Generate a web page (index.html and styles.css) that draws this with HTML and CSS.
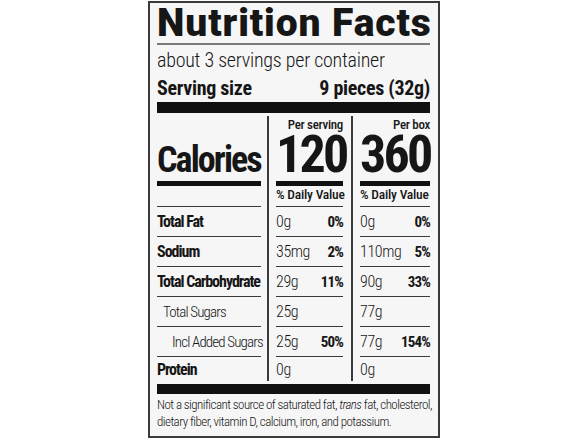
FILE: index.html
```html
<!DOCTYPE html>
<html>
<head>
<meta charset="utf-8">
<link rel="stylesheet" href="styles.css">
</head>
<body>
<div class="label">
  <div class="title">Nutrition Facts</div>
  <div class="servings">about 3 servings per container</div>
  <div class="size"><span>Serving size</span><span>9 pieces (32g)</span></div>
  <div class="bar thick"></div>
  <div class="table">
    <div class="col col-name">
      <div class="head">
        <div class="cal">Calories</div>
        <div class="bar mid"></div>
      </div>
      <div class="row b">Total Fat</div>
      <div class="row b">Sodium</div>
      <div class="row b">Total Carbohydrate</div>
      <div class="row ind1">Total Sugars</div>
      <div class="row ind2">Incl Added Sugars</div>
      <div class="row b last">Protein</div>
    </div>
    <div class="col col-val">
      <div class="head">
        <div class="per">Per serving</div>
        <div class="num">120</div>
        <div class="bar mid"></div>
        <div class="dv">% Daily Value</div>
      </div>
      <div class="row"><span>0g</span><b>0%</b></div>
      <div class="row"><span>35mg</span><b>2%</b></div>
      <div class="row"><span>29g</span><b>11%</b></div>
      <div class="row"><span>25g</span></div>
      <div class="row"><span>25g</span><b>50%</b></div>
      <div class="row last"><span>0g</span></div>
    </div>
    <div class="col col-val end">
      <div class="head">
        <div class="per">Per box</div>
        <div class="num">360</div>
        <div class="bar mid"></div>
        <div class="dv">% Daily Value</div>
      </div>
      <div class="row"><span>0g</span><b>0%</b></div>
      <div class="row"><span>110mg</span><b>5%</b></div>
      <div class="row"><span>90g</span><b>33%</b></div>
      <div class="row"><span>77g</span></div>
      <div class="row"><span>77g</span><b>154%</b></div>
      <div class="row last"><span>0g</span></div>
    </div>
  </div>
  <div class="bar foot"></div>
  <p class="note">Not a significant source of saturated fat, <i>trans</i> fat, cholesterol,<br>dietary fiber, vitamin D, calcium, iron, and potassium.</p>
</div>
</body>
</html>
```

FILE: styles.css
```css
html, body {
  margin: 0;
  padding: 0;
  background: #ffffff;
}
body {
  padding: 1px 0 0 148px;
  font-family: Roboto, "Open Sans", sans-serif;
  font-stretch: 75%;
  font-weight: 300;
  color: #161616;
}
.label {
  box-sizing: border-box;
  width: 292px;
  height: 437px;
  border: 2px solid #3a3a3a;
  background: #f6f6f6;
  padding: 0 8px 0 7px;
}
.title {
  font-stretch: 100%;
  font-weight: 900;
  font-size: 39px;
  line-height: 40px;
  height: 40px;
  letter-spacing: 0.9px;
  white-space: nowrap;
  border-bottom: 2px solid #7a7a7a;
}
.servings {
  font-size: 20px;
  line-height: 26px;
  height: 26px;
  margin-top: 2px;
  letter-spacing: -0.25px;
  white-space: nowrap;
}
.size {
  display: flex;
  justify-content: space-between;
  font-weight: 700;
  font-size: 20px;
  line-height: 24px;
  height: 24px;
  margin-top: 3px;
  letter-spacing: -0.3px;
  white-space: nowrap;
}
.bar { background: #111; }
.bar.thick { height: 11px; margin-top: 2px; }
.bar.mid { height: 5px; }
.bar.foot { height: 10px; margin-top: 3px; }
.table {
  display: flex;
  margin-top: 3px;
}
.col {
  display: flex;
  flex-direction: column;
}
.col-name {
  width: 104px;
  padding-right: 6px;
  border-right: 2px solid #3a3a3a;
}
.col-val {
  width: 67px;
  padding: 0 8px 0 7px;
  border-right: 2px solid #3a3a3a;
}
.col-val.end {
  width: 70px;
  padding-right: 0;
  border-right: none;
}
.head {
  height: 90px;
  display: flex;
  flex-direction: column;
}
.col-name .head { justify-content: flex-end; }
.cal {
  font-weight: 700;
  font-size: 36px;
  line-height: 40px;
  letter-spacing: -1.9px;
  white-space: nowrap;
}
.col-name .bar.mid { margin-top: 1px; margin-bottom: 20px; }
.per {
  text-align: right;
  font-weight: 500;
  font-size: 13px;
  line-height: 14px;
  letter-spacing: -0.3px;
  margin-top: 2px;
  white-space: nowrap;
}
.num {
  text-align: right;
  font-weight: 700;
  font-size: 52px;
  line-height: 46px;
  height: 46px;
  letter-spacing: -2.8px;
  padding-right: 2px;
  white-space: nowrap;
}
.col-val .bar.mid { margin-top: 3px; }
.dv {
  font-weight: 500;
  font-size: 13.5px;
  line-height: 17px;
  letter-spacing: -0.2px;
  white-space: nowrap;
}
.row {
  box-sizing: border-box;
  height: 30px;
  border-top: 1px solid #3a3a3a;
  display: flex;
  justify-content: space-between;
  align-items: center;
  font-size: 15px;
  letter-spacing: -0.85px;
  white-space: nowrap;
}
.row.last { height: 25px; }
.row.b { font-weight: 700; font-size: 16px; letter-spacing: -1px; }
.row span {
  font-weight: 300;
  font-size: 16px;
  letter-spacing: -0.4px;
}
.row b {
  font-weight: 700;
  font-size: 15px;
  letter-spacing: -0.8px;
}
.ind1 { padding-left: 6px; }
.ind2 { padding-left: 15px; }
.note {
  margin: 2px 0 0;
  font-size: 13px;
  line-height: 17px;
  letter-spacing: -0.55px;
  white-space: nowrap;
}
```
